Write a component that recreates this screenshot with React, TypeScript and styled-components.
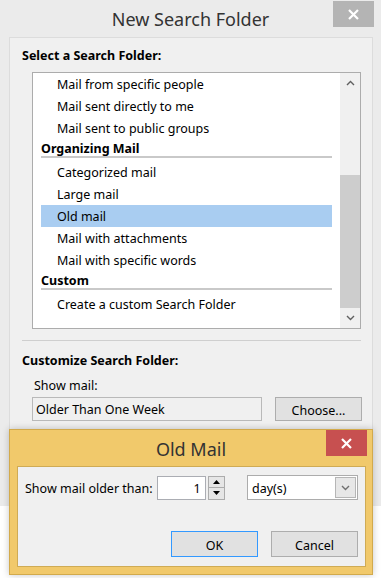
import styled, { createGlobalStyle } from 'styled-components'

const GlobalStyle = createGlobalStyle`
  html, body {
    margin: 0;
    padding: 0;
    background: #ffffff;
  }
  body {
    font-family: "Noto Sans", "Open Sans", sans-serif;
    font-size: 12.5px;
    color: #000;
  }
  * {
    box-sizing: border-box;
  }
`

const Page = styled.div`
  position: relative;
  width: 381px;
  height: 578px;
  overflow: hidden;
`

const Window = styled.div`
  display: flex;
  flex-direction: column;
  width: 381px;
  height: 506px;
  padding-bottom: 9px;
  background: #ebebeb;
`

const TitleBar = styled.div<{ $height: number }>`
  display: grid;
  grid-template-columns: 1fr auto 1fr;
  align-items: start;
  height: ${({ $height }) => $height}px;
  flex: none;
`

const Title = styled.div<{ $line: number }>`
  grid-column: 2;
  font-size: 18px;
  line-height: ${({ $line }) => $line}px;
  color: #333;
  white-space: nowrap;
`

const CloseButton = styled.div<{ $red?: boolean; $right: number; $top: number }>`
  grid-column: 3;
  justify-self: end;
  display: flex;
  align-items: center;
  justify-content: center;
  width: 41px;
  height: 26px;
  margin: ${({ $top, $right }) => `${$top}px ${$right}px 0 0`};
  background: ${({ $red }) => ($red ? '#c75050' : '#b4b4b4')};
`

const Panel = styled.div`
  flex: 1;
  margin: 0 8px 0 9px;
  padding: 10px 0 0 12px;
  background: #f0f0f0;
  border: 1px solid #dcdcdc;
`

const SectionLabel = styled.div<{ $top?: number }>`
  margin-top: ${({ $top }) => $top ?? 0}px;
  font-weight: 700;
  line-height: 16px;
`

const ListBox = styled.div`
  display: flex;
  width: 329px;
  height: 257px;
  margin: 8px 0 0 10px;
  background: #fff;
  border: 1px solid #acacac;
`

const ListContent = styled.div`
  flex: 1;
  padding: 0 8px;
  overflow: hidden;
`

const Item = styled.div<{ $selected?: boolean }>`
  height: 22px;
  padding-left: 16px;
  line-height: 24px;
  white-space: nowrap;
  background: ${({ $selected }) => ($selected ? '#a9cdf1' : 'transparent')};
`

const GroupHeader = styled.div`
  height: 22px;
  padding-top: 1px;
  font-weight: 700;
  line-height: 18px;
  border-bottom: 3px solid #fff;
  box-shadow: inset 0 -2px 0 #c9c9c9;
`

const ScrollBar = styled.div`
  display: flex;
  flex-direction: column;
  width: 20px;
  background: #f0f0f0;
`

const ScrollButton = styled.div`
  display: flex;
  align-items: center;
  justify-content: center;
  height: 20px;
  flex: none;
`

const Track = styled.div`
  display: flex;
  flex: 1;
  flex-direction: column;
  justify-content: flex-end;
`

const Thumb = styled.div`
  height: 133px;
  background: #cdcdcd;
`

const Divider = styled.div`
  height: 1px;
  margin: 11px 11px 0 0;
  background: #cfcfcf;
`

const FieldLabel = styled.div`
  margin: 9px 0 0 12px;
  line-height: 16px;
`

const FieldRow = styled.div`
  display: flex;
  gap: 13px;
  margin: 3px 0 0 10px;
`

const ReadOnlyField = styled.div`
  width: 230px;
  height: 24px;
  padding-left: 3px;
  line-height: 24px;
  background: #f0f0f0;
  border: 1px solid #b9b9b9;
`

const Button = styled.div<{ $default?: boolean; $height: number }>`
  display: flex;
  align-items: center;
  justify-content: center;
  width: 87px;
  height: ${({ $height }) => $height}px;
  padding-top: 2px;
  background: #e1e1e1;
  border: 1px solid ${({ $default }) => ($default ? '#3399ff' : '#adadad')};
`

const Dialog = styled.div`
  position: absolute;
  top: 429px;
  left: 9px;
  display: flex;
  flex-direction: column;
  width: 364px;
  height: 146px;
  background: #f1c96b;
  border: 1px solid #d2aa4c;
  box-shadow: 0 0 7px rgb(0 0 0 / 22%);
`

const DialogBody = styled.div`
  height: 101px;
  margin: 0 6px 0 7px;
  padding: 8px 7px 0 7px;
  background: #f0f0f0;
  border: 1px solid #cfab55;
`

const OptionRow = styled.div`
  display: flex;
  align-items: center;
  height: 25px;
`

const RowLabel = styled.span`
  padding-top: 2px;
`

const SpinInput = styled.div`
  width: 49px;
  height: 24px;
  margin-left: 4px;
  padding-right: 4px;
  line-height: 24px;
  text-align: right;
  background: #fff;
  border: 1px solid #abadb3;
`

const Spinner = styled.div`
  display: flex;
  flex-direction: column;
  width: 17px;
  height: 24px;
  margin-left: 2px;
`

const SpinHalf = styled.div`
  display: flex;
  flex: 1;
  align-items: center;
  justify-content: center;
  background: #e6e6e6;
  border: 1px solid #acacac;

  & + & {
    border-top: none;
  }
`

const Select = styled.div`
  display: flex;
  align-items: center;
  width: 111px;
  height: 25px;
  margin-left: auto;
  padding: 1px;
  background: #fff;
  border: 1px solid #acacac;
`

const SelectText = styled.div`
  flex: 1;
  padding: 2px 0 0 3px;
`

const SelectButton = styled.div`
  display: flex;
  align-items: center;
  justify-content: center;
  width: 21px;
  height: 21px;
  background: #e7e7e7;
  border: 1px solid #b6b6b6;
`

const ButtonRow = styled.div`
  display: flex;
  justify-content: flex-end;
  gap: 13px;
  margin-top: 31px;
`

const Cross = () => (
  <svg width="11" height="11" viewBox="0 0 11 11">
    <path d="M1 1 L10 10 M10 1 L1 10" stroke="#fff" strokeWidth="2.2" />
  </svg>
)

const Chevron = ({ up, color = '#606060' }: { up?: boolean; color?: string }) => (
  <svg width="9" height="6" viewBox="0 0 9 6">
    <polyline
      points={up ? '1,5 4.5,1.5 8,5' : '1,1 4.5,4.5 8,1'}
      fill="none"
      stroke={color}
      strokeWidth="1.4"
    />
  </svg>
)

const Triangle = ({ up }: { up?: boolean }) => (
  <svg width="7" height="4" viewBox="0 0 7 4">
    <polygon points={up ? '0,4 3.5,0 7,4' : '0,0 3.5,4 7,0'} fill="#000" />
  </svg>
)

const topItems = ['Mail from specific people', 'Mail sent directly to me', 'Mail sent to public groups']
const organizing = ['Categorized mail', 'Large mail', 'Old mail', 'Mail with attachments', 'Mail with specific words']

export default function App() {
  return (
    <>
      <GlobalStyle />
      <Page>
        <Window>
          <TitleBar $height={37}>
            <Title $line={39}>New Search Folder</Title>
            <CloseButton $top={1} $right={7}>
              <Cross />
            </CloseButton>
          </TitleBar>
          <Panel>
            <SectionLabel>Select a Search Folder:</SectionLabel>
            <ListBox>
              <ListContent>
                {topItems.map((t) => (
                  <Item key={t}>{t}</Item>
                ))}
                <GroupHeader>Organizing Mail</GroupHeader>
                {organizing.map((t) => (
                  <Item key={t} $selected={t === 'Old mail'}>
                    {t}
                  </Item>
                ))}
                <GroupHeader>Custom</GroupHeader>
                <Item>Create a custom Search Folder</Item>
              </ListContent>
              <ScrollBar>
                <ScrollButton>
                  <Chevron up />
                </ScrollButton>
                <Track>
                  <Thumb />
                </Track>
                <ScrollButton>
                  <Chevron />
                </ScrollButton>
              </ScrollBar>
            </ListBox>
            <Divider />
            <SectionLabel $top={12}>Customize Search Folder:</SectionLabel>
            <FieldLabel>Show mail:</FieldLabel>
            <FieldRow>
              <ReadOnlyField>Older Than One Week</ReadOnlyField>
              <Button $height={24}>Choose...</Button>
            </FieldRow>
          </Panel>
        </Window>

        <Dialog>
          <TitleBar $height={36}>
            <Title $line={39}>Old Mail</Title>
            <CloseButton $red $top={0} $right={5}>
              <Cross />
            </CloseButton>
          </TitleBar>
          <DialogBody>
            <OptionRow>
              <RowLabel>Show mail older than:</RowLabel>
              <SpinInput>1</SpinInput>
              <Spinner>
                <SpinHalf>
                  <Triangle up />
                </SpinHalf>
                <SpinHalf>
                  <Triangle />
                </SpinHalf>
              </Spinner>
              <Select>
                <SelectText>day(s)</SelectText>
                <SelectButton>
                  <Chevron color="#707070" />
                </SelectButton>
              </Select>
            </OptionRow>
            <ButtonRow>
              <Button $default $height={26}>
                OK
              </Button>
              <Button $height={26}>Cancel</Button>
            </ButtonRow>
          </DialogBody>
        </Dialog>
      </Page>
    </>
  )
}
